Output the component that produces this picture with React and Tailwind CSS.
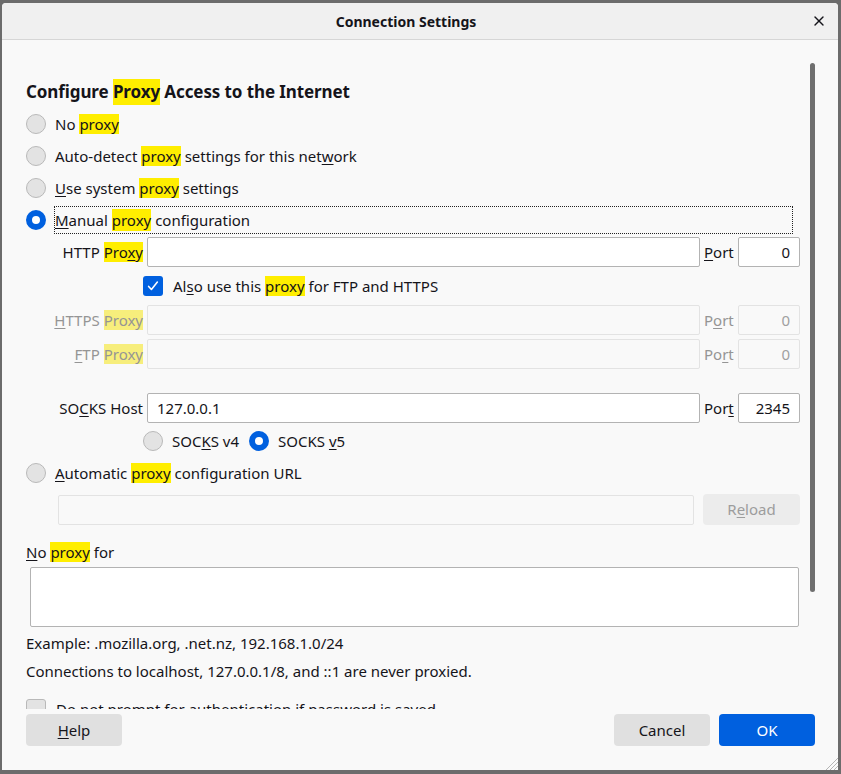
import { X } from 'lucide-react'

const font = { fontFamily: '"Noto Sans", "Open Sans", sans-serif' }

function Hl({ children, dim }) {
  return <span className={dim ? 'bg-[#f7ee7c]' : 'bg-[#ffee00]'}>{children}</span>
}

function Radio({ checked, className = '' }) {
  if (checked) {
    return <span className={`w-5 h-5 shrink-0 rounded-full border-[6px] border-[#0060df] bg-white ${className}`} />
  }
  return <span className={`w-5 h-5 shrink-0 rounded-full border border-[#b9b9b9] bg-[#e3e3e3] ${className}`} />
}

function Field({ value, disabled, right, className = '' }) {
  return (
    <div
      className={`h-[30px] rounded-[2px] border flex items-center px-[9px] ${
        disabled ? 'border-[#e3e3e3] bg-[#f9f9f9] text-[#a0a0a0]' : 'border-[#b3b3b3] bg-white text-[#15141a]'
      } ${right ? 'justify-end' : ''} ${className}`}
    >
      {value}
    </div>
  )
}

function ProxyRow({ label, port, disabled, mt = '' }) {
  return (
    <div className={`flex items-center h-[30px] ${mt}`}>
      <div className={`w-[117px] text-right ${disabled ? 'text-[#959595]' : ''}`}>{label}</div>
      <Field className="ml-1 flex-1" value="" disabled={disabled} />
      <div className={`mx-[4px] w-[30px] ${disabled ? 'text-[#959595]' : ''}`}>{port.label}</div>
      <Field className="w-[62px]" value={port.value} disabled={disabled} right />
    </div>
  )
}

export default function App() {
  return (
    <div className="w-[841px] h-[774px] bg-[#6c6c6c] pt-[3px] pl-[2px] pr-[3px] pb-[4px] text-[15px] text-[#15141a]" style={font}>
      <div className="relative w-full h-full bg-[#f9f9f9] rounded-t-[4px] flex flex-col overflow-hidden">
        {/* title bar */}
        <div className="h-[37px] shrink-0 bg-[#f0f0f0] border-b border-[#d6d6d6] flex items-center justify-center pr-[28px]">
          <span className="font-bold text-[14px]">Connection Settings</span>
          <X className="absolute right-[11px] top-[10px] w-[16px] h-[16px]" strokeWidth={2} />
        </div>

        {/* scroll area */}
        <div className="h-[669px] shrink-0 overflow-hidden pl-[24px] pr-[38px]">
          <h1 className="mt-[40px] h-6 flex items-center text-[17px] font-bold tracking-[-0.1px]">
            Configure&nbsp;<Hl>Proxy</Hl>&nbsp;Access to the Internet
          </h1>
          <div className="mt-1">
            <div className="h-8 flex items-center gap-[9px]">
              <Radio />
              <span>No <Hl>proxy</Hl></span>
            </div>
            <div className="h-8 flex items-center gap-[9px]">
              <Radio />
              <span>Auto-detect <Hl>proxy</Hl> settings for this net<u className="underline-offset-2">w</u>ork</span>
            </div>
            <div className="h-8 flex items-center gap-[9px]">
              <Radio />
              <span><u className="underline-offset-2">U</u>se system <Hl>proxy</Hl> settings</span>
            </div>
            <div className="h-8 flex items-center gap-[8px]">
              <Radio checked />
              <span className="flex-1 mr-[7px] h-[28px] flex items-center border border-dotted border-[#222]">
                <u className="underline-offset-2">M</u>anual&nbsp;<Hl>proxy</Hl>&nbsp;configuration
              </span>
            </div>
          </div>

          <ProxyRow
            mt="mt-px"
            label={<>HTTP <Hl>Pro<u className="underline-offset-2">x</u>y</Hl></>}
            port={{ label: <><u className="underline-offset-2">P</u>ort</>, value: '0' }}
          />
          <div className="h-[38px] flex items-center pl-[117px]">
            <span className="w-5 h-5 rounded-[3px] bg-[#0060df] flex items-center justify-center">
              <svg viewBox="0 0 16 16" className="w-[14px] h-[14px]" fill="none" stroke="white" strokeWidth="1.8" strokeLinecap="round" strokeLinejoin="round">
                <path d="M3 8.5l3.2 3.5L13 3.5" />
              </svg>
            </span>
            <span className="ml-[10px]">Al<u className="underline-offset-2">s</u>o use this <Hl>proxy</Hl> for FTP and HTTPS</span>
          </div>
          <ProxyRow
            disabled
            label={<><u className="underline-offset-2">H</u>TTPS <Hl dim>Proxy</Hl></>}
            port={{ label: <>P<u className="underline-offset-2">o</u>rt</>, value: '0' }}
          />
          <ProxyRow
            disabled
            mt="mt-1"
            label={<><u className="underline-offset-2">F</u>TP <Hl dim>Proxy</Hl></>}
            port={{ label: <>Po<u className="underline-offset-2">r</u>t</>, value: '0' }}
          />
          <div className="flex items-center h-[30px] mt-6">
            <div className="w-[117px] text-right">SO<u className="underline-offset-2">C</u>KS Host</div>
            <Field className="ml-1 flex-1" value="127.0.0.1" />
            <div className="mx-[4px] w-[30px]">Por<u className="underline-offset-2">t</u></div>
            <Field className="w-[62px]" value="2345" right />
          </div>
          <div className="h-9 flex items-center pl-[117px]">
            <Radio />
            <span className="ml-[9px]">SOC<u className="underline-offset-2">K</u>S v4</span>
            <Radio checked className="ml-[10px]" />
            <span className="ml-[9px]">SOCKS <u className="underline-offset-2">v</u>5</span>
          </div>
          <div className="h-[28px] flex items-center gap-[9px]">
            <Radio />
            <span><u className="underline-offset-2">A</u>utomatic <Hl>proxy</Hl> configuration URL</span>
          </div>
          <div className="mt-[7px] flex items-center pl-[32px]">
            <Field className="flex-1" value="" disabled />
            <button className="ml-[9px] w-[97px] h-[31px] rounded-[4px] bg-[#ececec] text-[#9d9d9d]">
              R<u className="underline-offset-2">e</u>load
            </button>
          </div>
          <div className="mt-4 h-[22px] flex items-center">
            <span><u className="underline-offset-2">N</u>o <Hl>proxy</Hl> for</span>
          </div>
          <div className="mt-1 ml-1 mr-px h-[60px] bg-white border border-[#b3b3b3] rounded-[2px]" />
          <div className="mt-[5px] h-[22px] flex items-center">Example: .mozilla.org, .net.nz, 192.168.1.0/24</div>
          <div className="mt-[6px] h-[22px] flex items-center">Connections to localhost, 127.0.0.1/8, and ::1 are never proxied.</div>
          <div className="mt-[16px] h-[22px] flex items-center gap-[10px]">
            <span className="w-5 h-5 rounded-[3px] border border-[#b9b9b9] bg-[#e3e3e3]" />
            <span>Do not prompt for authentication if password is saved</span>
          </div>
        </div>

        {/* footer */}
        <div className="flex-1 flex items-start pt-[5px] pl-[24px] pr-[23px]">
          <button className="w-[96px] h-[32px] rounded-[4px] bg-[#e0e0e0]">
            <u className="underline-offset-2">H</u>elp
          </button>
          <div className="flex-1" />
          <button className="w-[96px] h-[32px] rounded-[4px] bg-[#e0e0e0]">Cancel</button>
          <button className="ml-[9px] w-[96px] h-[32px] rounded-[4px] bg-[#0060df] text-white">OK</button>
        </div>

        {/* scrollbar thumb */}
        <div className="absolute left-[808px] top-[60px] w-[5px] h-[529px] rounded-full bg-[#6f6f6f]" />
        {/* resize grip */}
        <svg className="absolute right-0 bottom-0 w-[15px] h-[15px]" viewBox="0 0 15 15" stroke="#b5b5b5" strokeWidth="1">
          <path d="M15 3L3 15M15 7L7 15M15 11L11 15" />
        </svg>
      </div>
    </div>
  )
}
